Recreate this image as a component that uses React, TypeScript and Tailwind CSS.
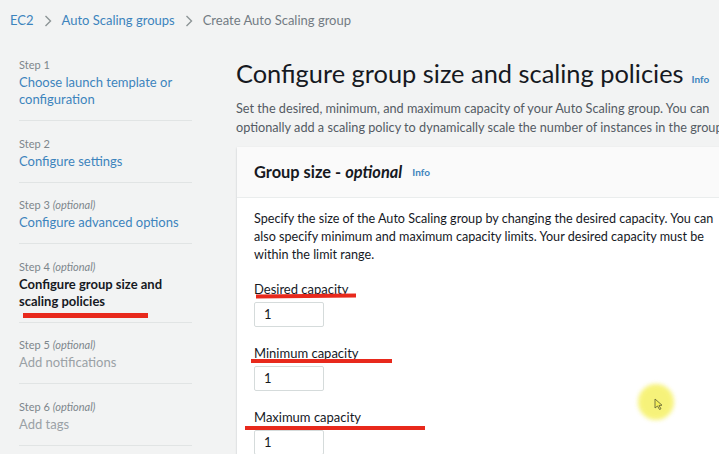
const steps = [
  { n: 1, optional: false, title: ["Choose launch template or", "configuration"], state: "link" },
  { n: 2, optional: false, title: ["Configure settings"], state: "link" },
  { n: 3, optional: true, title: ["Configure advanced options"], state: "link" },
  { n: 4, optional: true, title: ["Configure group size and", "scaling policies"], state: "active" },
  { n: 5, optional: true, title: ["Add notifications"], state: "disabled" },
  { n: 6, optional: true, title: ["Add tags"], state: "disabled" },
]

const Chevron = () => (
  <svg width="10" height="14" viewBox="0 0 10 14" className="mx-[9px]">
    <path d="M2.5 2 L7.5 7 L2.5 12" fill="none" stroke="#8d9596" strokeWidth="1.4" />
  </svg>
)

const Field = ({ label }: { label: string }) => (
  <div className="flex flex-col">
    <label className="text-[13px] leading-[18px] text-[#16191f]">{label}</label>
    <div className="mt-[4px] w-[70px] h-[25px] border border-[#d5dbdb] rounded-[2px] bg-white flex items-center pl-[9px] text-[13px] text-[#16191f]">
      1
    </div>
  </div>
)

export default function App() {
  return (
    <div
      className="relative w-[719px] h-[454px] overflow-hidden bg-[#f2f3f3] text-[#16191f]"
      style={{ fontFamily: "Lato, 'Liberation Sans', sans-serif" }}
    >
      {/* breadcrumbs */}
      <nav className="flex items-center h-[41px] pl-[10px] text-[13px]">
        <span className="text-[#3d84bd]">EC2</span>
        <Chevron />
        <span className="text-[#3d84bd]">Auto Scaling groups</span>
        <Chevron />
        <span className="text-[#737b83]">Create Auto Scaling group</span>
      </nav>

      <div className="flex">
        {/* wizard steps */}
        <aside className="w-[236px] shrink-0 pl-[19px] pr-[44px] pt-[14px]">
          {steps.map((s) => (
            <div key={s.n} className="border-b border-[#e1e4e4] pt-[2px] pb-[12px] mb-[12.5px]">
              <div className="text-[11px] leading-[16px] text-[#7d868c]">
                Step {s.n} {s.optional && <i>(optional)</i>}
              </div>
              <div
                className={
                  "text-[13px] leading-[17px] mt-[1px] " +
                  (s.state === "active"
                    ? "font-bold text-[#16191f]"
                    : s.state === "disabled"
                    ? "text-[#9aa1a6]"
                    : "text-[#3d84bd]")
                }
              >
                {s.title.map((t) => (
                  <div key={t}>{t}</div>
                ))}
              </div>
            </div>
          ))}
        </aside>

        {/* main */}
        <main className="flex-1 min-w-0 pt-[15px]">
          <h1 className="flex items-baseline whitespace-nowrap text-[25.4px] leading-[34px] font-normal text-[#16191f]">
            Configure group size and scaling policies
            <span className="ml-[8px] text-[10px] font-bold text-[#3d84bd]">Info</span>
          </h1>
          <p className="mt-[3px] text-[12.7px] leading-[19px] text-[#545b64] whitespace-nowrap">
            Set the desired, minimum, and maximum capacity of your Auto Scaling group. You can
            <br />
            optionally add a scaling policy to dynamically scale the number of instances in the group.
          </p>

          <section className="mt-[10px] ml-[1px] w-[520px] bg-white shadow-[0_1px_2px_rgba(0,28,36,0.2)]">
            <header className="h-[51px] bg-[#fafafa] border-b border-[#eaeded] flex items-center pl-[17px]">
              <span className="text-[16.4px] font-bold text-[#16191f]">
                Group size - <i>optional</i>
              </span>
              <span className="ml-[10px] text-[10px] font-bold text-[#3d84bd]">Info</span>
            </header>
            <div className="pl-[17px] pt-[12px] pb-[20px]">
              <p className="text-[12.6px] leading-[18px] whitespace-nowrap text-[#16191f]">
                Specify the size of the Auto Scaling group by changing the desired capacity. You can
                <br />
                also specify minimum and maximum capacity limits. Your desired capacity must be
                <br />
                within the limit range.
              </p>
              <div className="mt-[16px] flex flex-col gap-[17px]">
                <Field label="Desired capacity" />
                <Field label="Minimum capacity" />
                <Field label="Maximum capacity" />
              </div>
            </div>
          </section>
        </main>
      </div>

      {/* red annotation strokes drawn over the screenshot */}
      <div className="absolute left-[23px] top-[313px] w-[125px] h-[5px] bg-[#e8291c]" />
      <div className="absolute left-[256px] top-[294px] w-[100px] h-[4px] bg-[#e8291c] rotate-[-0.6deg]" />
      <div className="absolute left-[251px] top-[359px] w-[141px] h-[4px] bg-[#e8291c]" />
      <div className="absolute left-[245px] top-[426px] w-[180px] h-[4px] bg-[#e8291c]" />

      {/* cursor highlight */}
      <div className="absolute left-[638px] top-[384px] w-[36px] h-[36px] rounded-full bg-[#f5f05a] opacity-80 blur-[2px]" />
      <svg className="absolute left-[654px] top-[398px]" width="9" height="12" viewBox="0 0 9 12">
        <path d="M1 1 L1 10 L3.5 8 L5.5 11.5 L7 10.8 L5 7.5 L8 7.2 Z" fill="#f5f05a" stroke="#6b6a3a" strokeWidth="0.9" />
      </svg>
    </div>
  )
}
